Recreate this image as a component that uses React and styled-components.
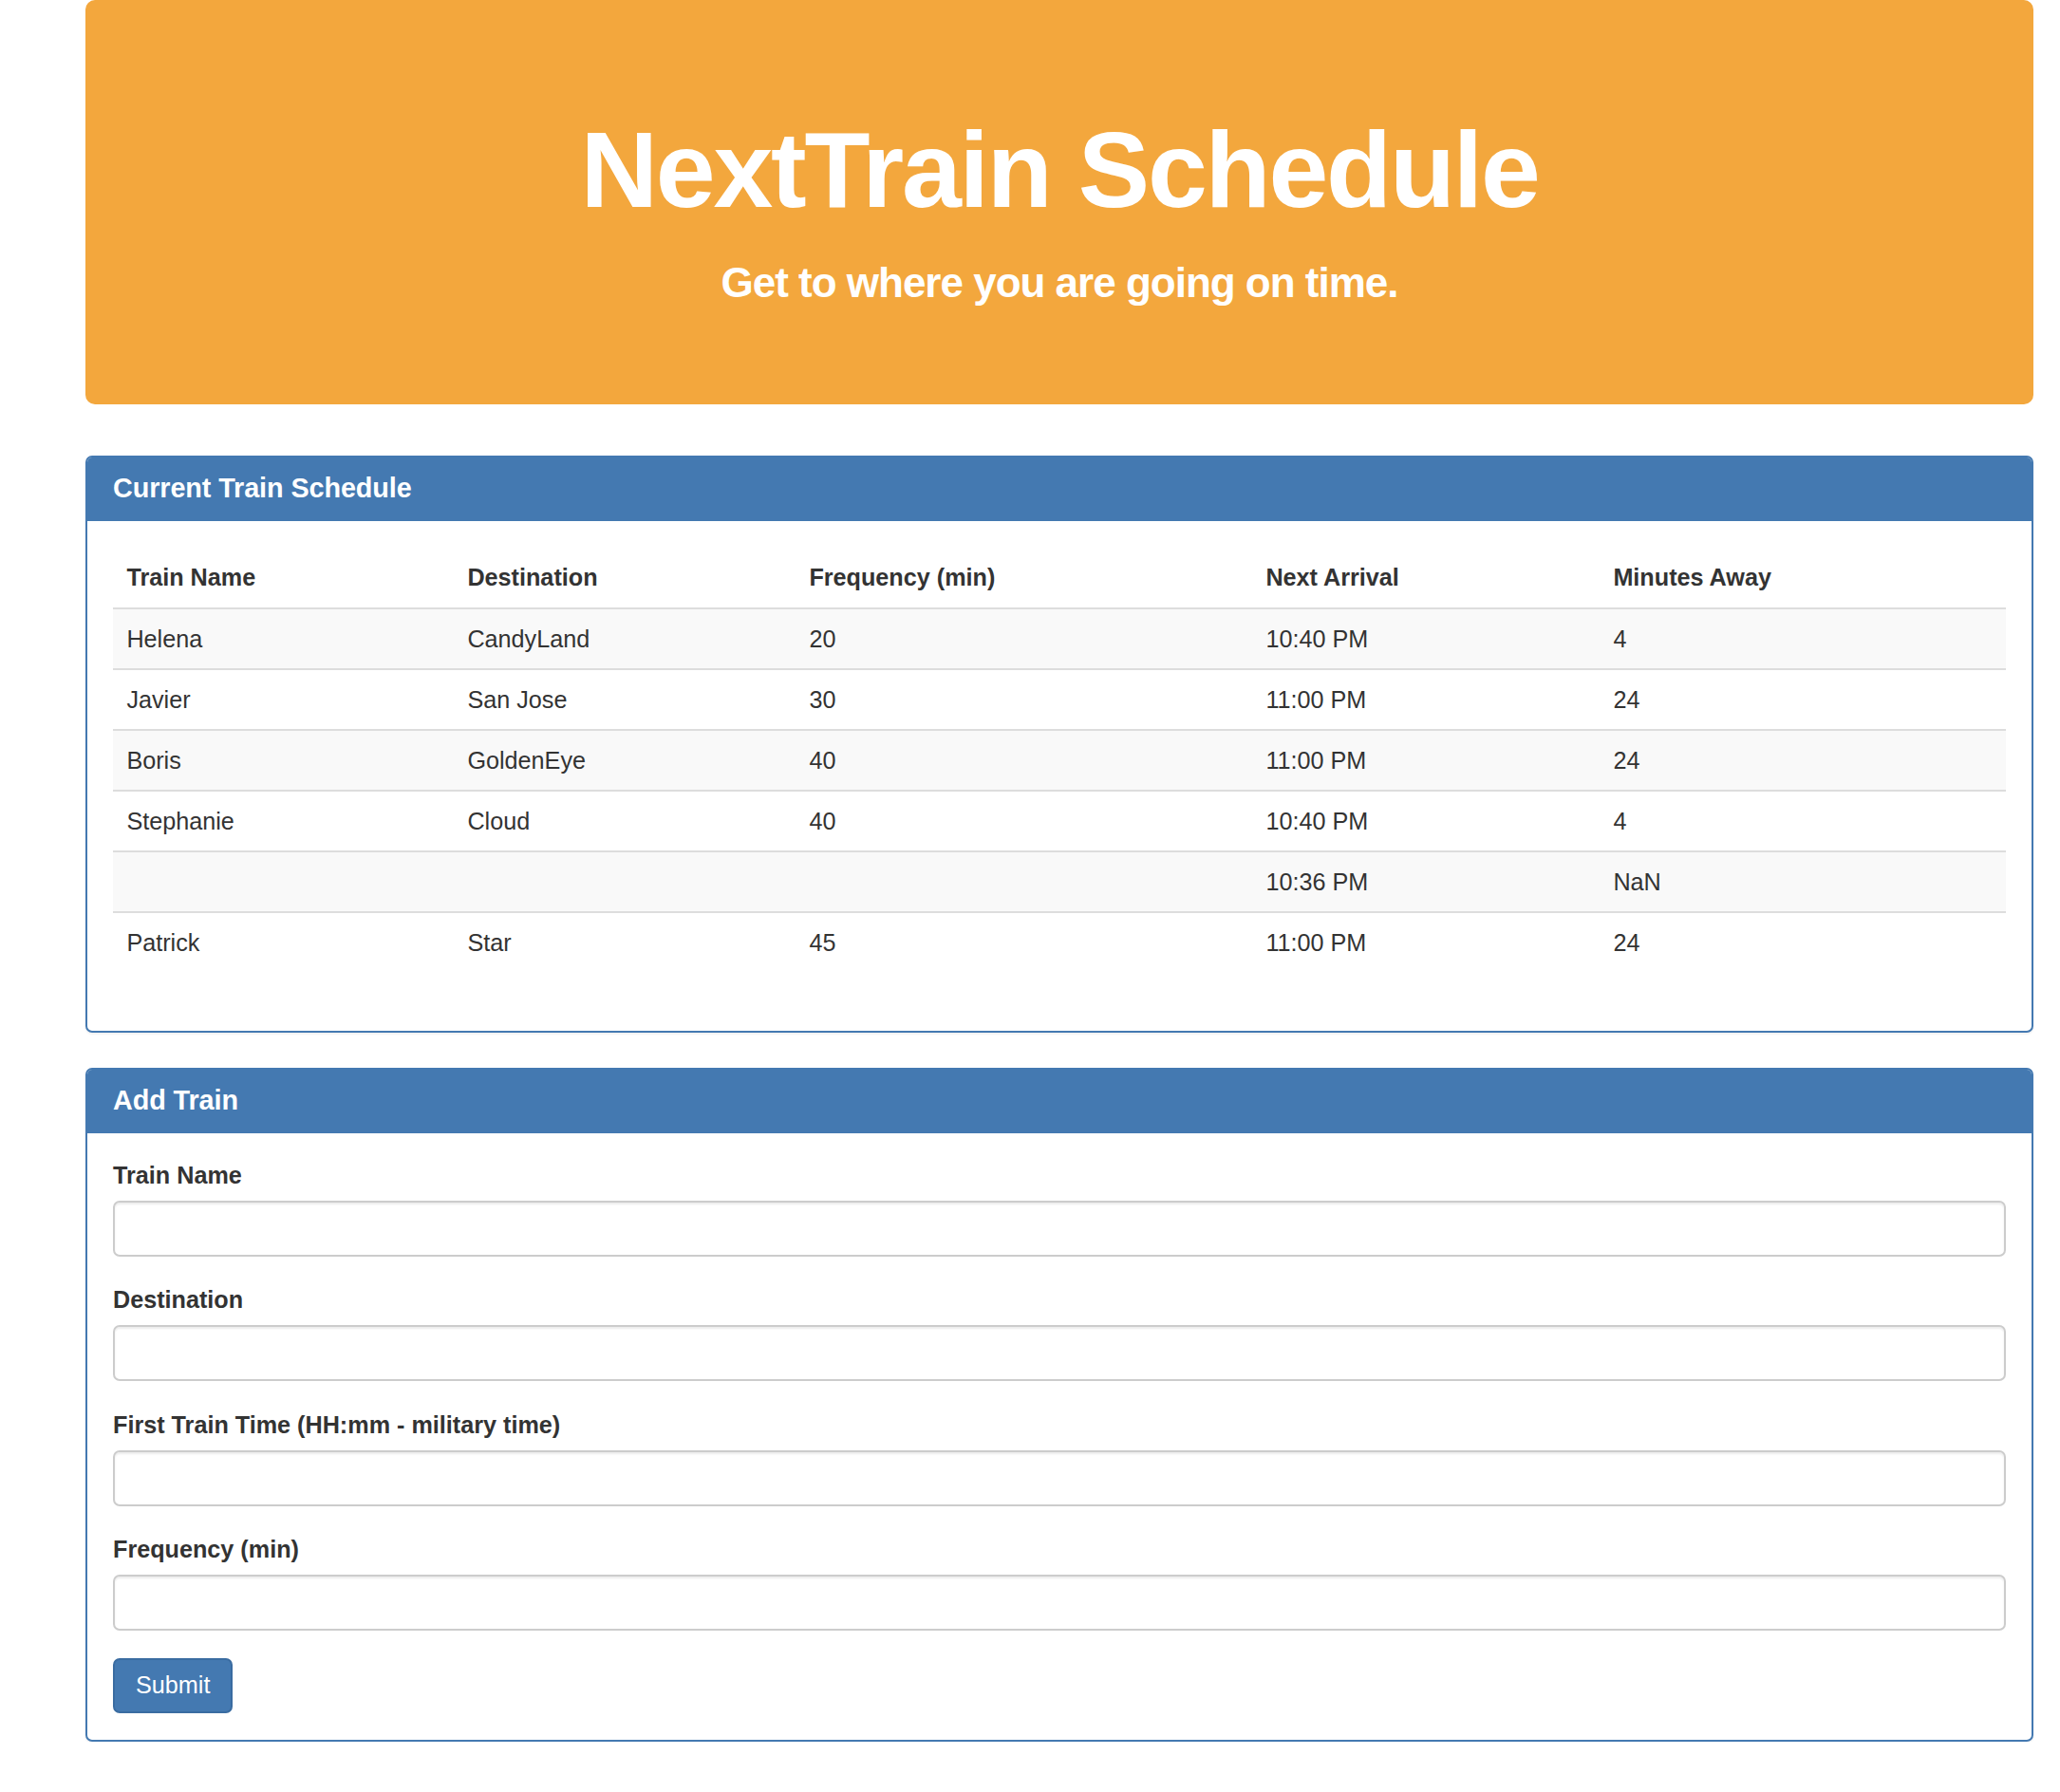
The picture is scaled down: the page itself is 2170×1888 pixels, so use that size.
import React from 'react';
import styled, { createGlobalStyle } from 'styled-components';

const GlobalStyle = createGlobalStyle`
  body {
    margin: 0;
    background: #fff;
    color: #333;
    font-family: "Liberation Sans", Arial, Helvetica, sans-serif;
  }
`;

const Page = styled.div`
  width: 2052px;
  margin-left: 90px;
`;

const Jumbotron = styled.header`
  background: #f3a73d;
  border-radius: 10px;
  padding: 117px 0 103px;
  margin-bottom: 54px;
  text-align: center;
  color: #fff;
`;

const Title = styled.h1`
  margin: 0;
  font-size: 113px;
  line-height: 1.1;
  font-weight: 700;
  letter-spacing: -2.2px;
`;

const Subtitle = styled.h3`
  margin: 33px 0 0;
  font-size: 44px;
  line-height: 1.1;
  font-weight: 700;
  letter-spacing: -1px;
`;

const Panel = styled.section`
  border: 2px solid #4479b1;
  border-radius: 7px;
  background: #fff;
  margin-bottom: ${p => p.gap || 0}px;
  box-shadow: 0 2px 2px rgba(0, 0, 0, 0.05);
`;

const PanelHeading = styled.div`
  background: #4479b1;
  border-bottom: 2px solid #4479b1;
  border-radius: 5px 5px 0 0;
  padding: 17px 27px;
`;

const PanelTitle = styled.h3`
  margin: 0;
  color: #fff;
  font-size: 28.8px;
  line-height: 31px;
  font-weight: 700;
  letter-spacing: -0.1px;
`;

const PanelBody = styled.div`
  padding: ${p => p.top || 27}px 27px 28px;
`;

const Table = styled.table`
  width: 100%;
  border-collapse: collapse;
  table-layout: fixed;
  margin-bottom: 34px;
  font-size: 25.2px;
`;

const Th = styled.th`
  text-align: left;
  font-weight: 700;
  padding: 14px 14.4px;
  line-height: 35px;
  border-bottom: 2px solid #ddd;
`;

const Row = styled.tr`
  background: ${p => (p.striped ? '#f9f9f9' : '#fff')};
  border-top: ${p => (p.divided ? '2px solid #ddd' : 'none')};
`;

const Td = styled.td`
  padding: 14px 14.4px;
  line-height: 34px;
  white-space: nowrap;
`;

const FormGroup = styled.div`
  margin-bottom: 28.5px;
`;

const Label = styled.label`
  display: block;
  font-size: 25.2px;
  font-weight: 700;
  line-height: 34px;
  margin-bottom: 10px;
`;

const Input = styled.input`
  display: block;
  box-sizing: border-box;
  width: 100%;
  height: 59px;
  border: 2px solid #ccc;
  border-radius: 7px;
  box-shadow: inset 0 2px 2px rgba(0, 0, 0, 0.075);
  padding: 10px 22px;
  font-size: 25.2px;
  font-family: inherit;
  outline: none;
`;

const SubmitButton = styled.button`
  display: block;
  box-sizing: border-box;
  height: 58px;
  margin-top: 2px;
  padding: 0 22px;
  background: #4479b1;
  border: 2px solid #3a6ca1;
  border-radius: 7px;
  color: #fff;
  font-family: inherit;
  font-size: 25.2px;
  line-height: 1;
`;

const columns = [
  { label: 'Train Name', width: 359 },
  { label: 'Destination', width: 360 },
  { label: 'Frequency (min)', width: 481 },
  { label: 'Next Arrival', width: 366 },
  { label: 'Minutes Away', width: 428 },
];

const trains = [
  ['Helena', 'CandyLand', '20', '10:40 PM', '4'],
  ['Javier', 'San Jose', '30', '11:00 PM', '24'],
  ['Boris', 'GoldenEye', '40', '11:00 PM', '24'],
  ['Stephanie', 'Cloud', '40', '10:40 PM', '4'],
  ['', '', '', '10:36 PM', 'NaN'],
  ['Patrick', 'Star', '45', '11:00 PM', '24'],
];

const fields = [
  'Train Name',
  'Destination',
  'First Train Time (HH:mm - military time)',
  'Frequency (min)',
];

function App() {
  return (
    <Page>
      <GlobalStyle />
      <Jumbotron>
        <Title>NextTrain Schedule</Title>
        <Subtitle>Get to where you are going on time.</Subtitle>
      </Jumbotron>

      <Panel gap={37}>
        <PanelHeading>
          <PanelTitle>Current Train Schedule</PanelTitle>
        </PanelHeading>
        <PanelBody top={28}>
          <Table>
            <colgroup>
              {columns.map(c => (
                <col key={c.label} style={{ width: c.width }} />
              ))}
            </colgroup>
            <thead>
              <tr>
                {columns.map(c => (
                  <Th key={c.label}>{c.label}</Th>
                ))}
              </tr>
            </thead>
            <tbody>
              {trains.map((t, i) => (
                <Row key={i} striped={i % 2 === 0} divided={i > 0}>
                  {t.map((cell, j) => (
                    <Td key={j}>{cell}</Td>
                  ))}
                </Row>
              ))}
            </tbody>
          </Table>
        </PanelBody>
      </Panel>

      <Panel>
        <PanelHeading>
          <PanelTitle>Add Train</PanelTitle>
        </PanelHeading>
        <PanelBody>
          <form onSubmit={e => e.preventDefault()}>
            {fields.map(f => (
              <FormGroup key={f}>
                <Label>{f}</Label>
                <Input type="text" />
              </FormGroup>
            ))}
            <SubmitButton type="submit">Submit</SubmitButton>
          </form>
        </PanelBody>
      </Panel>
    </Page>
  );
}

export default App;
